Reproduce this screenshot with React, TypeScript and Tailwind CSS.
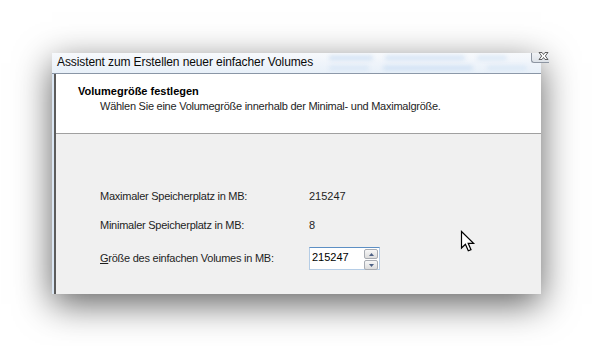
import React from "react";

const font = { fontFamily: '"Liberation Sans", Arial, sans-serif' };

const Row: React.FC<{ label: React.ReactNode; children: React.ReactNode; className?: string }> = ({ label, children, className }) => (
  <div className={`flex items-center ${className ?? ""}`}>
    <div className="w-[209px] text-[11px] leading-[13px] tracking-[-0.25px] text-[#1e1e1e]">{label}</div>
    {children}
  </div>
);

const Spinner: React.FC = () => (
  <div className="flex flex-col w-[14px] h-[21px] my-[1px] mr-[1px] gap-[1px]">
    {[0, 1].map((i) => (
      <div
        key={i}
        className="flex-1 flex items-center justify-center rounded-[2px] border border-[#a8acb3] bg-gradient-to-b from-[#f7f7f7] to-[#dcdcdc]"
      >
        <svg width="5" height="3" viewBox="0 0 5 3">
          {i === 0 ? <path d="M0 3 L2.5 0 L5 3 Z" fill="#4d6185" /> : <path d="M0 0 L2.5 3 L5 0 Z" fill="#4d6185" />}
        </svg>
      </div>
    ))}
  </div>
);

const Cursor: React.FC = () => (
  <svg className="absolute left-[460px] top-[230px]" width="16" height="23" viewBox="0 0 16 23">
    <path d="M1.5 1.5 L1.5 18 L5.4 14.2 L8.3 20.8 L11 19.7 L8.2 13.3 L13.6 13.3 Z" fill="#fff" stroke="#000" strokeWidth="1.2" strokeLinejoin="miter" />
  </svg>
);

export default function App() {
  return (
    <div className="relative w-[593px] h-[346px] bg-white overflow-hidden" style={font}>
      <div className="pt-[53px] pl-[52px]">
        <div className="w-[489px] h-[241px] flex flex-col shadow-[0_10px_34px_rgba(0,0,0,0.62)] bg-[#f0f0f0]">
          {/* title bar */}
          <div className="h-[21px] flex items-start bg-gradient-to-b from-[#f7f9fc] to-[#e8f0f9] border-b border-[#8a96a6]">
            <div className="pl-[5px] pt-[2px] text-[12px] leading-[15px] tracking-[-0.1px] text-[#0a0a0a] whitespace-nowrap">
              Assistent zum Erstellen neuer einfacher Volumes
            </div>
            <div className="flex-1 flex flex-col gap-[6px] pt-[3px] pl-[16px] pr-[4px]">
              <div className="flex gap-[12px]">
                <span className="h-[4px] w-[44px] rounded-full bg-[#cfe0f3] blur-[2px]" />
                <span className="h-[4px] w-[80px] rounded-full bg-[#d2e2f4] blur-[2px]" />
                <span className="h-[4px] w-[30px] rounded-full bg-[#d8e6f5] blur-[2px]" />
              </div>
              <div className="flex gap-[14px]">
                <span className="h-[4px] w-[40px] rounded-full bg-[#d6e5f5] blur-[2px]" />
                <span className="h-[4px] w-[90px] rounded-full bg-[#cddff3] blur-[2px]" />
                <span className="h-[4px] w-[40px] rounded-full bg-[#d8e6f5] blur-[2px]" />
              </div>
            </div>
            <div className="w-[34px] h-[10px] flex items-start justify-center rounded-bl-[3px] border-l border-b border-[#8e96a2] bg-gradient-to-b from-[#f0f2f5] to-[#dde2e8]">
              <svg width="11" height="8" viewBox="0 0 11 8" className="ml-[6px] mt-[-1px]">
                <path d="M1 0.5 L4 0.5 L5.5 2.5 L7 0.5 L10 0.5 L7.3 4 L10 7.5 L7 7.5 L5.5 5.5 L4 7.5 L1 7.5 L3.7 4 Z" fill="#fafafa" stroke="#3d3d3d" strokeWidth="0.8" />
              </svg>
            </div>
          </div>
          {/* body */}
          <div className="flex-1 flex">
            <div className="w-[2px] bg-[#dbe7f4]" />
            <div className="flex-1 flex flex-col border-l-2 border-[#5c5c5c]">
              <div className="h-[60px] bg-white border-b border-[#a0a0a0] pl-[22px] pt-[11px]">
                <div className="text-[11px] leading-[13px] font-bold text-black">Volumegröße festlegen</div>
                <div className="mt-[2px] pl-[22px] text-[11px] leading-[13px] tracking-[-0.25px] text-[#1e1e1e]">
                  Wählen Sie eine Volumegröße innerhalb der Minimal- und Maximalgröße.
                </div>
              </div>
              <div className="flex-1 bg-[#f0f0f0] pl-[44px] pt-[56px]">
                <Row label="Maximaler Speicherplatz in MB:">
                  <span className="text-[11px] leading-[13px] text-[#1e1e1e]">215247</span>
                </Row>
                <Row label="Minimaler Speicherplatz in MB:" className="mt-[16px]">
                  <span className="text-[11px] leading-[13px] text-[#1e1e1e]">8</span>
                </Row>
                <Row
                  className="mt-[15px]"
                  label={
                    <>
                      <span className="underline underline-offset-[1px]">G</span>röße des einfachen Volumes in MB:
                    </>
                  }
                >
                  <div className="w-[71px] h-[23px] flex bg-white border border-[#b5cde6] border-t-[#5d8fc4]">
                    <div className="flex-1 pl-[2px] pt-[3px] text-[11px] leading-[13px] text-black">215247</div>
                    <Spinner />
                  </div>
                </Row>
              </div>
            </div>
          </div>
        </div>
      </div>
      <Cursor />
    </div>
  );
}
